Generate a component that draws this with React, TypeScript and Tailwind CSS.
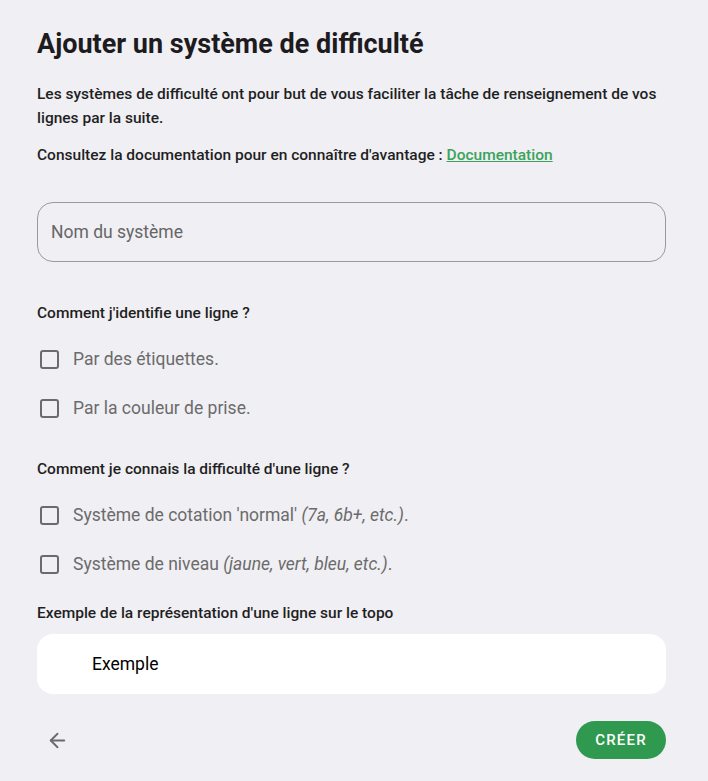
import { ArrowLeft } from 'lucide-react'

function Check({ children }: { children: React.ReactNode }) {
  return (
    <label className="flex items-center h-[49px]">
      <span className="w-[19px] h-[19px] ml-[3px] border-2 border-[#6b6b6b] rounded-[3px]" />
      <span className="ml-[14px] text-[17.5px] text-[#6b6b6b]">{children}</span>
    </label>
  )
}

export default function App() {
  return (
    <div className="min-h-screen w-full bg-[#f0eff4] text-[#1d1b20] pl-[37px] pr-[42px] pt-[26px] pb-[20px]" style={{ fontFamily: 'Roboto, sans-serif' }}>
      <h1 className="text-[27px] font-bold leading-[36px]">Ajouter un système de difficulté</h1>

      <p className="mt-[20px] text-[15.5px] font-medium leading-[24px] text-[#1f1f1f]">
        Les systèmes de difficulté ont pour but de vous faciliter la tâche de renseignement de vos lignes par la suite.
      </p>
      <p className="mt-[13px] text-[15.5px] font-medium leading-[24px] text-[#1f1f1f]">
        Consultez la documentation pour en connaître d'avantage :{' '}
        <a href="#" className="text-[#3aa35a] underline">Documentation</a>
      </p>

      <div className="mt-[35px] h-[60px] w-full rounded-[16px] border border-[#9a9a9a] flex items-center px-[13px]">
        <span className="text-[17.5px] text-[#666]">Nom du système</span>
      </div>

      <h2 className="mt-[39px] text-[15.5px] font-medium leading-[24px] text-[#1f1f1f]">Comment j'identifie une ligne ?</h2>
      <div className="mt-[10px] flex flex-col">
        <Check>Par des étiquettes.</Check>
        <Check>Par la couleur de prise.</Check>
      </div>

      <h2 className="mt-[24px] text-[15.5px] font-medium leading-[24px] text-[#1f1f1f]">Comment je connais la difficulté d'une ligne ?</h2>
      <div className="mt-[10px] flex flex-col">
        <Check>
          Système de cotation 'normal' <i>(7a, 6b+, etc.)</i>.
        </Check>
        <Check>
          Système de niveau <i>(jaune, vert, bleu, etc.)</i>.
        </Check>
      </div>

      <h2 className="mt-[12px] text-[15.5px] font-medium leading-[24px] text-[#1f1f1f]">Exemple de la représentation d'une ligne sur le topo</h2>
      <div className="mt-[9px] h-[60px] w-full rounded-[16px] bg-white flex items-center pl-[55px]">
        <span className="text-[17.5px] text-black">Exemple</span>
      </div>

      <div className="mt-[26px] flex items-center justify-between">
        <button className="w-[40px] h-[40px] flex items-center justify-center">
          <ArrowLeft size={23} strokeWidth={2} color="#6b6b6b" />
        </button>
        <button className="h-[38px] w-[90px] rounded-full bg-[#2f9a4f] text-white text-[15px] font-medium tracking-[0.08em]">
          CRÉER
        </button>
      </div>
    </div>
  )
}
